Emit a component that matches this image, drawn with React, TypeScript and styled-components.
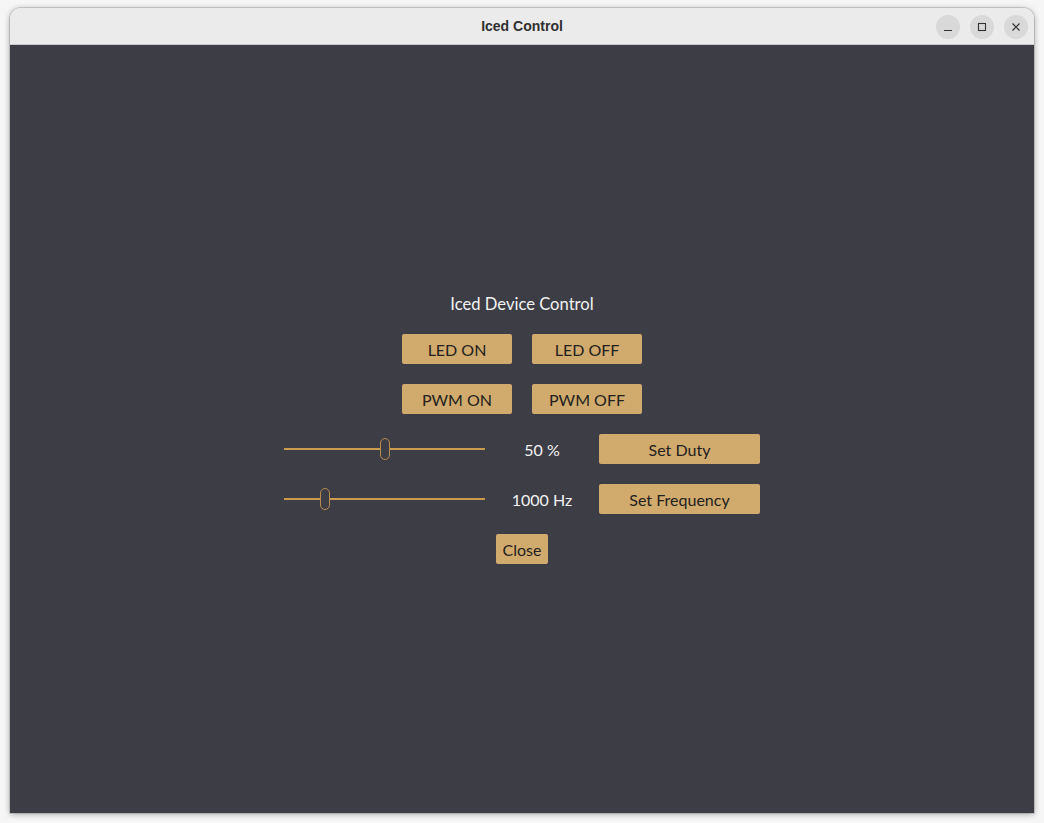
import React, { useState } from "react";
import styled, { createGlobalStyle } from "styled-components";

const GlobalStyle = createGlobalStyle`
  html, body {
    margin: 0;
    padding: 0;
    background: #f4f4f4;
  }
  body {
    font-family: Lato, "Noto Sans", sans-serif;
  }
`;

const Desktop = styled.div`
  width: 1044px;
  height: 823px;
  padding: 8px 10px 10px 10px;
  box-sizing: border-box;
  background: #f6f6f6;
`;

const Window = styled.div`
  width: 1024px;
  height: 805px;
  display: flex;
  flex-direction: column;
  border-radius: 11px 11px 0 0;
  overflow: hidden;
  box-shadow: 0 1px 6px rgba(0, 0, 0, 0.35), 0 0 0 1px rgba(0, 0, 0, 0.12);
`;

const TitleBar = styled.div`
  height: 36px;
  flex: 0 0 36px;
  background: #ebebeb;
  border-bottom: 1px solid #c8c8c8;
  position: relative;
  display: flex;
  align-items: center;
  justify-content: center;
`;

const TitleText = styled.div`
  font-family: "Liberation Sans", Arial, sans-serif;
  font-weight: bold;
  font-size: 14px;
  color: #303030;
`;

const WindowControls = styled.div`
  position: absolute;
  right: 6px;
  top: 7px;
  display: flex;
  gap: 10px;
`;

const CtrlButton = styled.div`
  width: 24px;
  height: 24px;
  border-radius: 50%;
  background: #d9d9d9;
  display: flex;
  align-items: center;
  justify-content: center;
`;

const Content = styled.div`
  flex: 1;
  background: #3d3d46;
  display: flex;
  align-items: center;
  justify-content: center;
`;

const Column = styled.div`
  display: flex;
  flex-direction: column;
  align-items: center;
  gap: 20px;
`;

const Heading = styled.div`
  color: #f2f2f2;
  font-size: 16.6px;
  line-height: 20px;
`;

const Row = styled.div`
  display: flex;
  align-items: center;
  gap: 20px;
`;

const Button = styled.button<{ $w: number }>`
  width: ${(p) => p.$w}px;
  height: 30px;
  padding: 0;
  border: none;
  border-radius: 2px;
  background: #d1aa6d;
  color: #23211e;
  font-family: Lato, "Noto Sans", sans-serif;
  font-size: 16px;
  display: flex;
  align-items: center;
  justify-content: center;
  cursor: pointer;
`;

const SliderTrack = styled.div`
  position: relative;
  width: 201px;
  height: 30px;
`;

const Rail = styled.div`
  position: absolute;
  left: 0;
  right: 0;
  top: 14px;
  height: 2px;
  background: #cc9a4c;
`;

const Handle = styled.div`
  position: absolute;
  top: 4px;
  width: 10px;
  height: 22px;
  box-sizing: border-box;
  border: 1.5px solid #b68c4f;
  border-radius: 6px;
  background: #3d3d46;
`;

const ValueLabel = styled.div`
  width: 74px;
  text-align: center;
  color: #f2f2f2;
  font-size: 16px;
`;

function Slider({ value, min, max }: { value: number; min: number; max: number }) {
  const t = (value - min) / (max - min);
  const left = t * (201 - 12) + 1;
  return (
    <SliderTrack>
      <Rail />
      <Handle style={{ left: `${left}px` }} />
    </SliderTrack>
  );
}

export default function App() {
  const [duty] = useState(50);
  const [freq] = useState(1000);

  return (
    <>
      <GlobalStyle />
      <Desktop>
        <Window>
          <TitleBar>
            <TitleText>Iced Control</TitleText>
            <WindowControls>
              <CtrlButton>
                <svg width="10" height="10" viewBox="0 0 10 10">
                  <path d="M1 8.5h8" stroke="#333" strokeWidth="1.2" />
                </svg>
              </CtrlButton>
              <CtrlButton>
                <svg width="10" height="10" viewBox="0 0 10 10">
                  <rect x="1.5" y="1.5" width="7" height="7" fill="none" stroke="#333" strokeWidth="1.1" />
                </svg>
              </CtrlButton>
              <CtrlButton>
                <svg width="10" height="10" viewBox="0 0 10 10">
                  <path d="M1.5 1.5l7 7M8.5 1.5l-7 7" stroke="#333" strokeWidth="1.2" />
                </svg>
              </CtrlButton>
            </WindowControls>
          </TitleBar>
          <Content>
            <Column>
              <Heading>Iced Device Control</Heading>
              <Row>
                <Button $w={110}>LED ON</Button>
                <Button $w={110}>LED OFF</Button>
              </Row>
              <Row>
                <Button $w={110}>PWM ON</Button>
                <Button $w={110}>PWM OFF</Button>
              </Row>
              <Row>
                <Slider value={duty} min={0} max={100} />
                <ValueLabel>{duty} %</ValueLabel>
                <Button $w={161}>Set Duty</Button>
              </Row>
              <Row>
                <Slider value={freq} min={100} max={5000} />
                <ValueLabel>{freq} Hz</ValueLabel>
                <Button $w={161}>Set Frequency</Button>
              </Row>
              <Button $w={52}>Close</Button>
            </Column>
          </Content>
        </Window>
      </Desktop>
    </>
  );
}
